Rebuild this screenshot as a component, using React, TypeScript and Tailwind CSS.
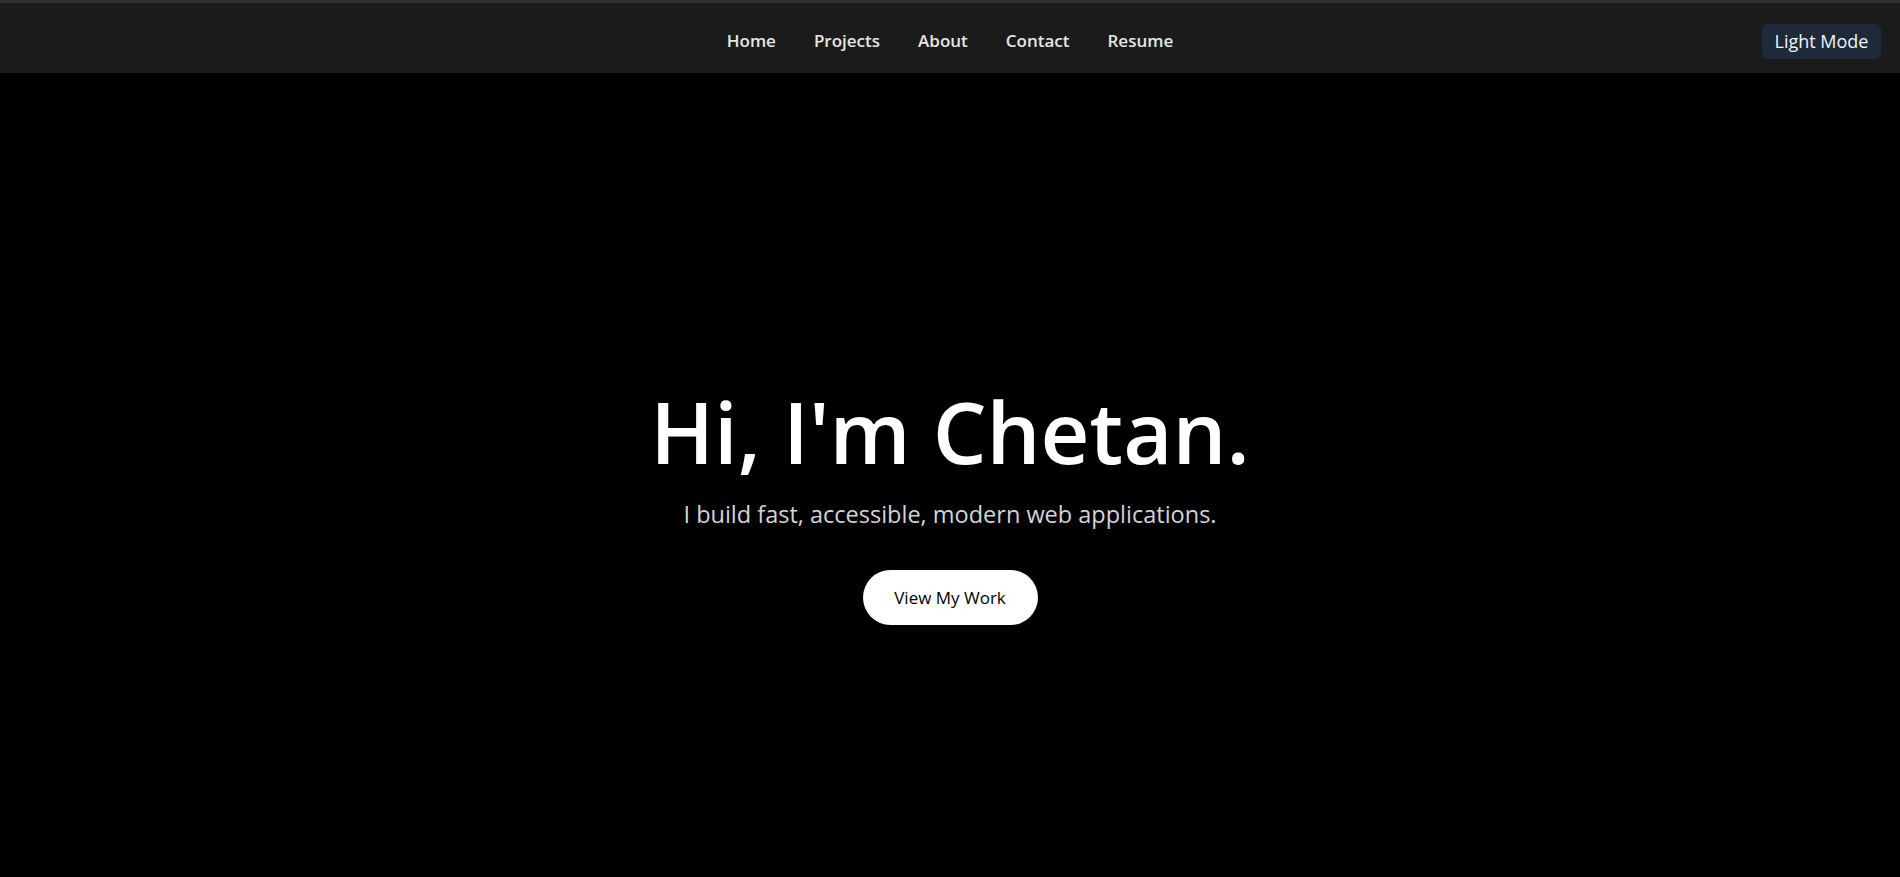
import React from "react";

export default function App() {
  const links = ["Home", "Projects", "About", "Contact", "Resume"];
  return (
    <div
      className="min-h-screen bg-black text-white"
      style={{ fontFamily: '"Open Sans", "Noto Sans", sans-serif' }}
    >
      <header className="border-t-[3px] border-[#2f2f34] bg-[#1b1b1b] h-[73px] grid grid-cols-[1fr_auto_1fr] items-center">
        <div />
        <nav className="flex items-center gap-[38px] pt-[5px]">
          {links.map((l) => (
            <a key={l} className="text-[17px] font-semibold text-[#e6e6e6] cursor-pointer">
              {l}
            </a>
          ))}
        </nav>
        <div className="flex justify-end pr-[19px] pt-[6px]">
          <button className="h-[35px] w-[119px] rounded-[6px] bg-[#1e293b] text-[18px] text-[#f1f5f9]">
            Light Mode
          </button>
        </div>
      </header>
      <main className="flex flex-col items-center pt-[312px] pb-[200px]">
        <h1 className="text-[85px] leading-[1.1] font-semibold text-white">Hi, I'm Chetan.</h1>
        <p className="mt-[18px] text-[23.5px] leading-[1.5] text-[#d4d4d8]">
          I build fast, accessible, modern web applications.
        </p>
        <button className="mt-[38px] h-[55px] w-[175px] rounded-full bg-white text-black text-[17px] font-medium">
          View My Work
        </button>
      </main>
    </div>
  );
}
